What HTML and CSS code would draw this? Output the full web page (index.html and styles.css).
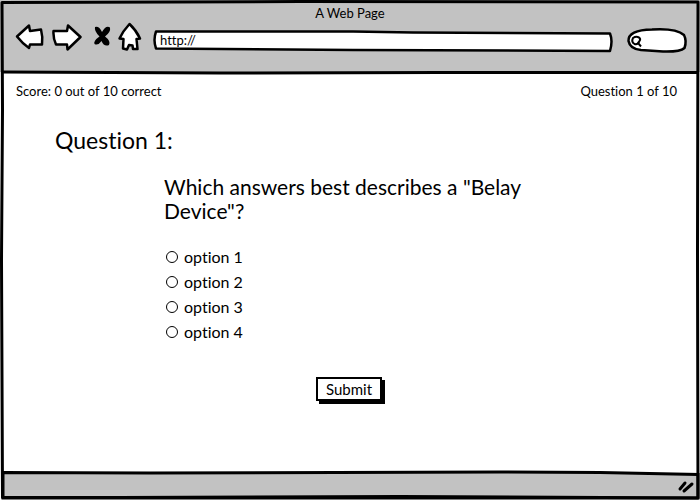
FILE: index.html
```html
<!DOCTYPE html>
<html lang="en">
<head>
<meta charset="utf-8">
<title>A Web Page</title>
<link rel="stylesheet" href="styles.css">
</head>
<body>
<div class="window">
  <header class="toolbar">
    <div class="title">A Web Page</div>
    <nav class="controls">
      <button class="tool back" type="button" aria-label="Back">
        <svg width="30" height="30" viewBox="0 0 30 30"><path class="shape" d="M2 14.500L14 3.500L15 9L26 7.500Q28 15 27 22.500L15 22.500L14 26Q7 21 2 14.500Z"/></svg>
      </button>
      <button class="tool forward" type="button" aria-label="Forward">
        <svg width="30" height="30" viewBox="0 0 30 30"><path class="shape" d="M1.500 9L15 9L16 3.500Q22 9 28.500 15L15.500 27.500L15 22.500L4 22.500Q1 16 1.500 9Z"/></svg>
      </button>
      <button class="tool stop" type="button" aria-label="Stop">
        <svg width="18" height="30" viewBox="0 0 18 30"><path d="M2 5Q6 3.500 9 10Q13 3 17 5.500Q18 10 12 14.500Q18 19 16 23Q11 25 8.500 19Q5 24 1.500 22Q0 19 6.500 14.500Q1 9 2 5Z"/></svg>
      </button>
      <button class="tool home" type="button" aria-label="Home">
        <svg width="24" height="30" viewBox="0 0 24 30"><path class="shape" d="M11.500 2Q18 8 22 16.500L18.500 17L19.500 27L15 27L14.500 23.500L11 23L9 27.500L5 26.500L5.500 17L1.500 16.500Q5 9 11.500 2Z"/></svg>
      </button>
      <label class="address">
        <svg class="fill" viewBox="0 0 460 24" preserveAspectRatio="none"><path class="shape" d="M3 3.500L200 3.500L260 4.500L457 5.500Q460 13 457 23L200 22L3 20.500Q0 12 3 3.500Z"/></svg>
        <input type="text" value="http://" aria-label="Address">
      </label>
      <label class="search">
        <svg class="fill" viewBox="0 0 60 26" preserveAspectRatio="none"><path class="shape" d="M1.500 14Q1 3 25 2.500Q49 1 57 8Q60 14 57.500 21Q53 25 36 24.500L14 23Q3 22 1.500 14Z"/><path class="lens" d="M12.500 14Q11 18 7.500 17Q4 15 6 11Q9 9 12 10.500Q14 12 12.500 14L11 16L14 19.500"/></svg>
        <input type="text" aria-label="Search">
      </label>
    </nav>
    <svg class="rule" viewBox="0 0 700 5" preserveAspectRatio="none"><path d="M3 2L220 3L440 2.500L698 2.500"/></svg>
  </header>
  <main class="quiz">
    <div class="status"><span>Score: 0 out of 10 correct</span><span>Question 1 of 10</span></div>
    <h1>Question 1:</h1>
    <form class="question">
      <p>Which answers best describes a "Belay Device"?</p>
      <div class="options">
        <label><input type="radio" name="answer">option 1</label>
        <label><input type="radio" name="answer">option 2</label>
        <label><input type="radio" name="answer">option 3</label>
        <label><input type="radio" name="answer">option 4</label>
      </div>
      <button class="submit" type="button">Submit</button>
    </form>
  </main>
  <footer class="statusbar">
    <svg class="fill" viewBox="0 0 700 28" preserveAspectRatio="none"><path class="bar" d="M3 0.500L150 1L500 0L600 0.500L698 2.500L698 26L3 26Z"/></svg>
    <svg class="grip" width="18" height="16" viewBox="0 0 18 16"><path d="M3 11L8 5M7 13L15 6"/></svg>
  </footer>
  <svg class="frame" viewBox="0 0 700 500" preserveAspectRatio="none"><path d="M2 2.500L300 1.500L698 2L697.500 250L698 498L400 496.500L120 497.500L2.500 497.500L1.500 260L2.500 110Z"/></svg>
</div>
</body>
</html>
```

FILE: styles.css
```css
* { box-sizing: border-box; }

body {
  margin: 0;
  background: #fff;
  color: #000;
  font-family: Lato, sans-serif;
  font-size: 13px;
  font-variant-ligatures: none;
}

button, input { font: inherit; color: inherit; }

.window {
  position: relative;
  display: flex;
  flex-direction: column;
  min-height: 100vh;
}

svg { display: block; }
path { vector-effect: non-scaling-stroke; }

.fill {
  position: absolute;
  inset: 0;
  width: 100%;
  height: 100%;
  overflow: visible;
}

.shape {
  fill: #fff;
  stroke: #000;
  stroke-width: 2.5;
  stroke-linejoin: round;
}

.lens { fill: none; stroke: #000; stroke-width: 2; }

.frame {
  position: absolute;
  inset: 0;
  width: 100%;
  height: 100%;
  pointer-events: none;
  fill: none;
  stroke: #000;
  stroke-width: 3;
  stroke-linejoin: round;
}

.toolbar {
  padding-top: 5px;
  background: #c2c2c2;
}

.title { line-height: 16px; text-align: center; }

.controls {
  display: flex;
  align-items: center;
  padding: 0 13px 0 15px;
}

.tool {
  flex: none;
  padding: 0;
  border: 0;
  background: none;
}

.forward { margin-left: 7px; }
.stop { margin-left: 11px; }
.home { margin-left: 7px; }

.address, .search { position: relative; display: flex; }
.address { flex: 1; height: 24px; margin: 6px 14px 0 11px; }
.search { width: 60px; height: 26px; margin-top: 6px; }

.address input, .search input {
  position: relative;
  width: 100%;
  padding: 0 7px;
  border: 0;
  outline: 0;
  background: none;
}

.search input { padding-left: 17px; }

.rule {
  width: 100%;
  height: 5px;
  margin-top: 17px;
  background: linear-gradient(#c2c2c2 50%, #fff 50%);
  stroke: #000;
  stroke-width: 3;
  fill: none;
}

.quiz { flex: 1; padding: 6px 23px 24px 16px; }

.status {
  display: flex;
  justify-content: space-between;
  line-height: 20px;
}

h1 {
  margin: 24px 0 20px 39px;
  font-size: 23px;
  font-weight: 400;
  line-height: 30px;
}

.question { margin: 0 143px 0 148px; }

.question p {
  margin: 0;
  font-size: 21px;
  line-height: 24px;
}

.options {
  display: grid;
  margin-top: 21px;
  font-size: 16px;
  line-height: 25px;
}

.options label {
  display: flex;
  align-items: center;
  justify-self: start;
  gap: 6px;
}

.options input {
  appearance: none;
  width: 12px;
  height: 12px;
  margin: 0 0 0 2px;
  border: 1px solid #000;
  border-radius: 50%;
}

.options input:checked { background: radial-gradient(#000 45%, #fff 50%); }

.submit {
  display: block;
  height: 24px;
  margin: 33px auto 0;
  padding: 0 8px;
  border: 2px solid #000;
  background: #fff;
  box-shadow: 3px 3px 0 #000;
  font-size: 15px;
  line-height: 20px;
}

.statusbar {
  position: relative;
  display: flex;
  align-items: center;
  justify-content: flex-end;
  height: 28px;
  padding-right: 5px;
}

.bar { fill: #c2c2c2; stroke: #000; stroke-width: 3; }

.grip {
  position: relative;
  fill: none;
  stroke: #000;
  stroke-width: 3;
  stroke-linecap: round;
}
```
